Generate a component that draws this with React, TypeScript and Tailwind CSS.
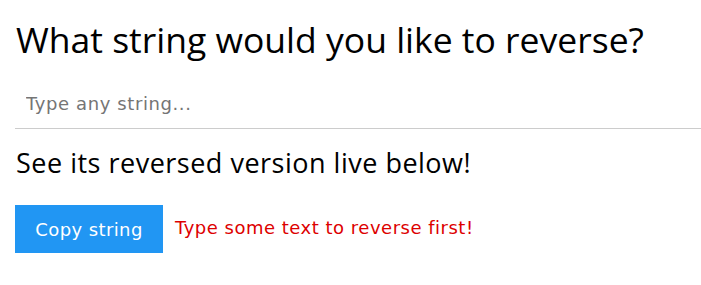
import { useState } from 'react';

export default function App() {
  const [text, setText] = useState('');
  const reversed = text.split('').reverse().join('');

  return (
    <main className="min-h-screen bg-white pl-[15px] pt-[17px] font-['Open_Sans',sans-serif] text-black">
      <h1 className="pl-px text-[35.5px] leading-[44px] font-normal">
        What string would you like to reverse?
      </h1>

      <input
        value={text}
        onChange={e => setText(e.target.value)}
        placeholder="Type any string..."
        className="mt-[31px] block w-full border-b border-[#cccccc] px-[11px] pb-[12px] font-['DejaVu_Sans',sans-serif] text-[18px] leading-[24px] tracking-[0.6px] outline-none placeholder:text-[#757575]"
      />

      <h2 className="mt-[17px] pl-px text-[27px] leading-[34px] font-normal tracking-[0.5px]">
        {reversed.length > 0 ? reversed : 'See its reversed version live below!'}
      </h2>

      <div className="mt-[25px] flex items-center gap-3 font-['DejaVu_Sans',sans-serif]">
        <button className="h-12 w-[148px] bg-[#2196f3] text-[18px] tracking-[0.4px] text-white">
          Copy string
        </button>
        {reversed.length === 0 && (
          <span className="mb-[4px] text-[18px] tracking-[0.5px] text-[#dd0000]">
            Type some text to reverse first!
          </span>
        )}
      </div>
    </main>
  );
}
